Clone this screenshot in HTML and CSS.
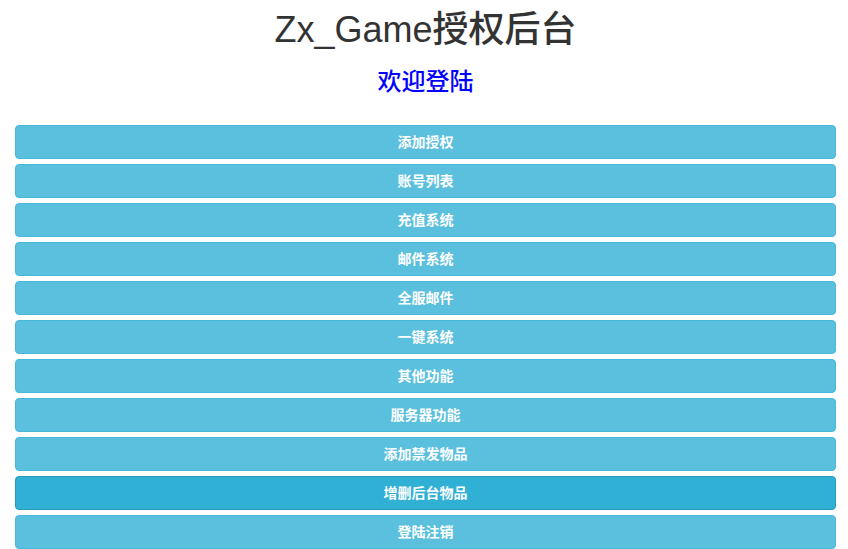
FILE: index.html
```html
<!DOCTYPE html>
<html lang="zh-CN">
<head>
<meta charset="utf-8">
<title>Zx_Game授权后台</title>
<link rel="stylesheet" href="styles.css">
</head>
<body>
<div class="page">
  <h1 class="title">Zx_Game授权后台</h1>
  <h3 class="welcome">欢迎登陆</h3>
  <div class="menu">
    <a class="btn">添加授权</a>
    <a class="btn">账号列表</a>
    <a class="btn">充值系统</a>
    <a class="btn">邮件系统</a>
    <a class="btn">全服邮件</a>
    <a class="btn">一键系统</a>
    <a class="btn">其他功能</a>
    <a class="btn">服务器功能</a>
    <a class="btn">添加禁发物品</a>
    <a class="btn active">增删后台物品</a>
    <a class="btn">登陆注销</a>
  </div>
</div>
</body>
</html>
```

FILE: styles.css
```css
html, body {
  margin: 0;
  padding: 0;
  background: #fff;
}
body {
  font-family: "Liberation Sans", "Noto Sans CJK SC", sans-serif;
  color: #333;
  font-size: 14px;
}
.page {
  padding: 0 12px 0 15px;
}
.title {
  margin: 10px 0 0;
  font-size: 36px;
  font-weight: 500;
  line-height: 40px;
  text-align: center;
  color: #333;
}
.welcome {
  margin: 18px 0 0;
  font-size: 24px;
  font-weight: 500;
  line-height: 28px;
  text-align: center;
  color: #0000ff;
}
.menu {
  margin-top: 29px;
  display: flex;
  flex-direction: column;
  gap: 5px;
}
.btn {
  display: block;
  box-sizing: border-box;
  height: 34px;
  line-height: 20px;
  padding: 6px 12px;
  text-align: center;
  color: #fff;
  font-size: 14px;
  font-weight: 700;
  background: #5bc0de;
  border: 1px solid #46b8da;
  border-radius: 4px;
  text-decoration: none;
}
.btn.active {
  background: #31b0d5;
  border-color: #269abc;
}
```
